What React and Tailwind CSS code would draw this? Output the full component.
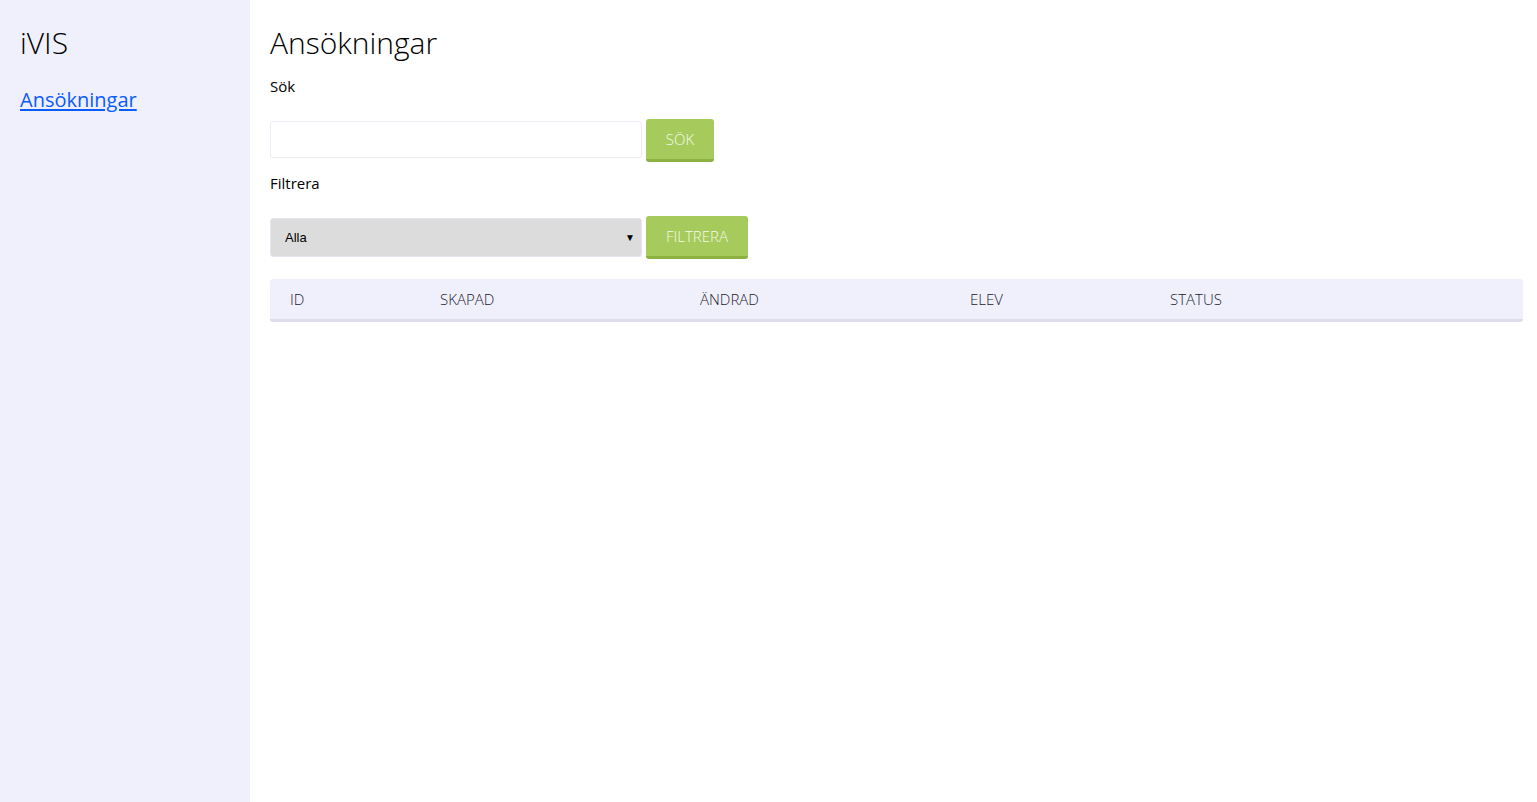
import React, { useState } from "react";

const font = { fontFamily: '"Open Sans", "Noto Sans", sans-serif' };

export default function App() {
  const [query, setQuery] = useState("");
  const [filter, setFilter] = useState("Alla");

  const columns = [
    { label: "ID", w: "w-[150px]" },
    { label: "SKAPAD", w: "w-[260px]" },
    { label: "ÄNDRAD", w: "w-[270px]" },
    { label: "ELEV", w: "w-[200px]" },
    { label: "STATUS", w: "flex-1" },
  ];

  return (
    <div className="flex min-h-[802px] bg-white text-black" style={font}>
      <aside className="w-[250px] shrink-0 bg-[#f0f0fd] px-5 pt-[22px]">
        <h1 className="text-[30px] font-light leading-[42px]">iVIS</h1>
        <a href="#" className="mt-[22px] inline-block text-[20px] leading-[28px] text-[#0a5cff] underline underline-offset-2">
          Ansökningar
        </a>
      </aside>

      <main className="flex-1 pl-5 pr-[14px] pt-[22px]">
        <h2 className="text-[30px] font-light leading-[42px]">Ansökningar</h2>

        <label className="mt-[12px] block text-[15px] leading-5">Sök</label>
        <div className="mt-[23px] flex items-start gap-1">
          <input
            value={query}
            onChange={e => setQuery(e.target.value)}
            className="mt-[2px] h-[37px] w-[372px] rounded-[3px] border border-[#ececf8] bg-white px-3 text-sm outline-none"
          />
          <button className="h-[43px] w-[68px] rounded-[3px] border-b-[3px] border-[#8bb13f] bg-[#a6cb5c] text-[15px] font-light text-[#f4f9ea]">
            SÖK
          </button>
        </div>

        <label className="mt-[11px] block text-[15px] leading-5">Filtrera</label>
        <div className="mt-[23px] flex items-start gap-1">
          <div className="relative mt-[2px] h-[39px] w-[372px] rounded-[3px] border border-[#e6e6f2] bg-[#dcdcdc]">
            <select
              value={filter}
              onChange={e => setFilter(e.target.value)}
              className="h-full w-full appearance-none bg-transparent pl-[14px] text-[13px] text-black outline-none"
              style={{ fontFamily: '"Liberation Sans", Arial, sans-serif' }}
            >
              <option>Alla</option>
            </select>
            <span className="pointer-events-none absolute right-[6px] top-[11px] text-[10px] text-black">▼</span>
          </div>
          <button className="h-[43px] w-[102px] rounded-[3px] border-b-[3px] border-[#8bb13f] bg-[#a6cb5c] text-[15px] font-light text-[#f4f9ea]">
            FILTRERA
          </button>
        </div>

        <div className="mt-[20px] flex h-[43px] items-center rounded-[3px] border-b-[3px] border-[#dcdcec] bg-[#f0f0fd] text-[15px] font-light text-[#1a1a2a]">
          {columns.map(c => (
            <div key={c.label} className={`${c.w} pl-5`}>
              {c.label}
            </div>
          ))}
        </div>
      </main>
    </div>
  );
}
